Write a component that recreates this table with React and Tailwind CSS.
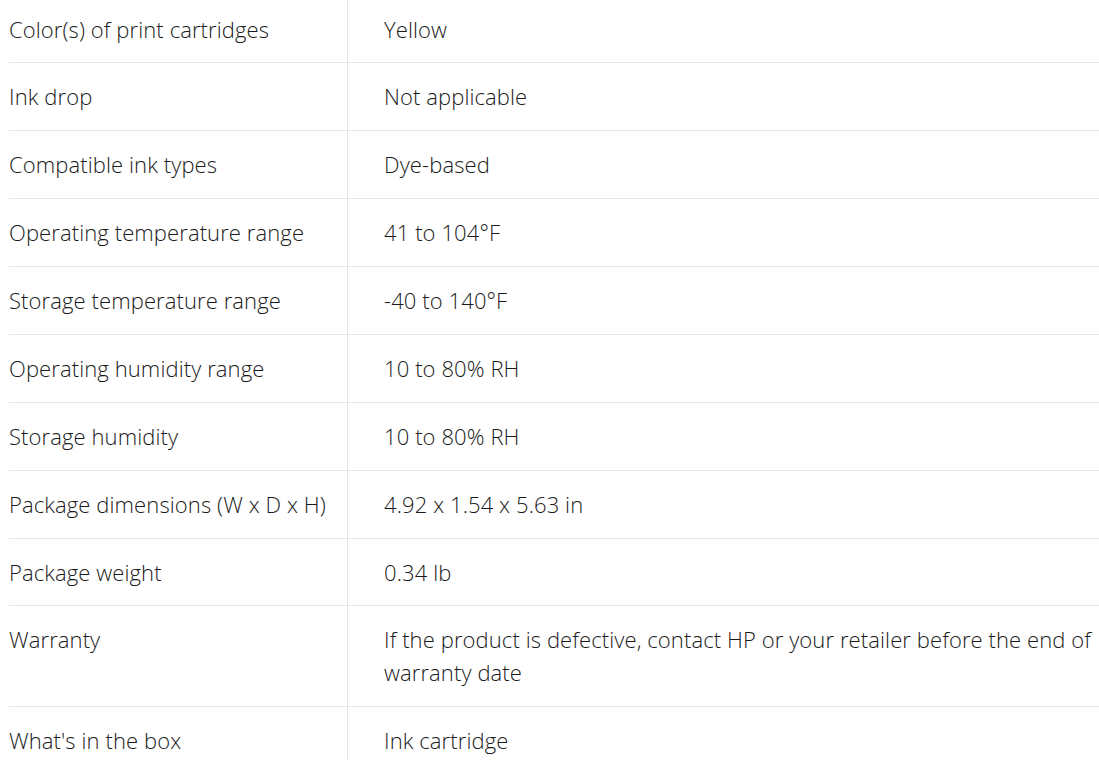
import React from "react";

const rows = [
  ["Color(s) of print cartridges", "Yellow"],
  ["Ink drop", "Not applicable"],
  ["Compatible ink types", "Dye-based"],
  ["Operating temperature range", "41 to 104°F"],
  ["Storage temperature range", "-40 to 140°F"],
  ["Operating humidity range", "10 to 80% RH"],
  ["Storage humidity", "10 to 80% RH"],
  ["Package dimensions (W x D x H)", "4.92 x 1.54 x 5.63 in"],
  ["Package weight", "0.34 lb"],
  ["Warranty", "If the product is defective, contact HP or your retailer before the end of warranty date"],
  ["What's in the box", "Ink cartridge"],
];

export default function App() {
  return (
    <div className="w-[1099px] h-[760px] overflow-hidden bg-white">
      <div
        className="ml-[9px] -mt-[4.45px] text-[22px] leading-[33px] font-light text-[#1a1a1a] tracking-[0.1px]"
        style={{ fontFamily: "'Open Sans', 'Noto Sans', sans-serif" }}
      >
        {rows.map(([k, v]) => (
          <div key={k} className="grid grid-cols-[339px_1fr] border-b border-[#e6e6e6]">
            <div className="border-r border-[#e6e6e6] py-[16.94px]">{k}</div>
            <div className="py-[16.94px] pl-[36px] pr-[2px]">{v}</div>
          </div>
        ))}
      </div>
    </div>
  );
}
